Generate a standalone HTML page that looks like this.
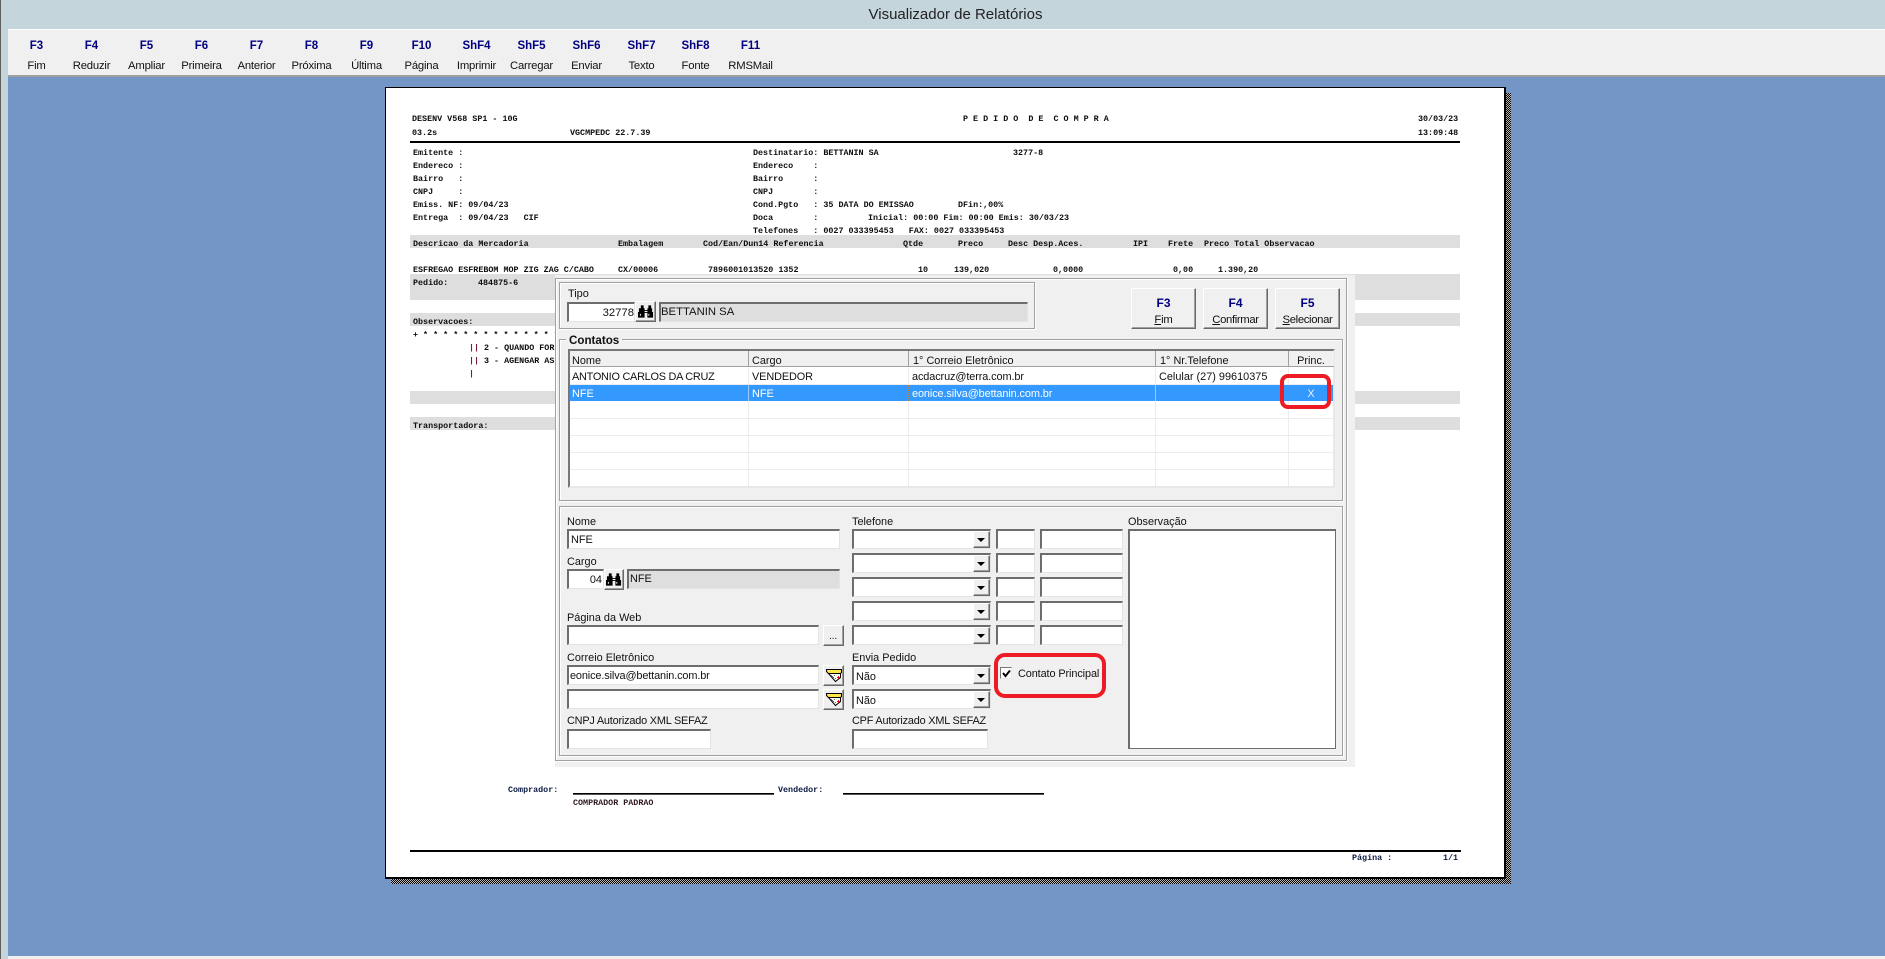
<!DOCTYPE html>
<html lang="pt"><head><meta charset="utf-8"><title>Visualizador de Relatórios</title>
<style>
html,body{margin:0;padding:0}
body{width:1885px;height:959px;overflow:hidden;position:relative;background:#c4d5dc;font-family:"Liberation Sans",sans-serif}
div,span{position:absolute;box-sizing:border-box}
.r{font:bold 8.4px/12px "Liberation Mono",monospace;white-space:pre;color:#0c0c0c;margin-top:1px}
.n{font-weight:bold;color:#000080}
.k{font:bold 11.5px/14px "Liberation Sans",sans-serif;color:#000080;text-align:center;width:55px;top:38px;margin-top:1px}
.v{font:11.3px/14px "Liberation Sans",sans-serif;color:#111;text-align:center;width:55px;top:58px;letter-spacing:-.2px;margin-top:1px}
.t{font:10.9px/14px "Liberation Sans",sans-serif;color:#111;white-space:pre;margin-top:2px}
.band{background:#dedede;left:410px;width:1050px;height:13px}
.g{border:1px solid #a0a0a0;box-shadow:inset 1px 1px 0 #fff,1px 1px 0 #fff}
.f{background:#fff;border-style:solid;border-width:2px 1px 1px 2px;border-color:#6d6d6d #e4e4e4 #e4e4e4 #6d6d6d;height:20px}
.ro{background:#dedede}
.b{background:#f0f0f0;border:1px solid;border-color:#fff #696969 #696969 #fff;box-shadow:inset -1px -1px 0 #a0a0a0}
.a{width:0;height:0;border-left:4px solid transparent;border-right:4px solid transparent;border-top:4px solid #000;left:3px;top:6px}
.gl{left:570px;width:763px;height:1px;background:#ececec}
.gv{top:351px;height:135px;width:1px;background:#ececec}
.red{border:4px solid #ed1c24}
</style></head><body>

<!-- window chrome -->
<div style="left:0;top:0;width:1px;height:959px;background:#606060"></div>
<div class="t" style="left:798px;width:315px;top:4px;font-size:15px;line-height:18px;text-align:center;color:#222">Visualizador de Relatórios</div>
<div style="left:8px;top:29px;width:1877px;height:48px;background:#f0f0f0;border-top:1px solid #fff;border-bottom:2px solid #a0a0a0"></div>
<div style="left:8px;top:77px;width:1877px;height:879px;background:#7496c6"></div>
<div style="left:8px;top:956px;width:1877px;height:3px;background:#f0f0f0"></div>

<!-- toolbar -->
<div class="k" style="left:9px">F3</div><div class="v" style="left:9px">Fim</div>
<div class="k" style="left:64px">F4</div><div class="v" style="left:64px">Reduzir</div>
<div class="k" style="left:119px">F5</div><div class="v" style="left:119px">Ampliar</div>
<div class="k" style="left:174px">F6</div><div class="v" style="left:174px">Primeira</div>
<div class="k" style="left:229px">F7</div><div class="v" style="left:229px">Anterior</div>
<div class="k" style="left:284px">F8</div><div class="v" style="left:284px">Próxima</div>
<div class="k" style="left:339px">F9</div><div class="v" style="left:339px">Última</div>
<div class="k" style="left:394px">F10</div><div class="v" style="left:394px">Página</div>
<div class="k" style="left:449px">ShF4</div><div class="v" style="left:449px">Imprimir</div>
<div class="k" style="left:504px">ShF5</div><div class="v" style="left:504px">Carregar</div>
<div class="k" style="left:559px">ShF6</div><div class="v" style="left:559px">Enviar</div>
<div class="k" style="left:614px">ShF7</div><div class="v" style="left:614px">Texto</div>
<div class="k" style="left:668px">ShF8</div><div class="v" style="left:668px">Fonte</div>
<div class="k" style="left:723px">F11</div><div class="v" style="left:723px">RMSMail</div>

<!-- page -->
<div style="left:391px;top:93px;width:1120px;height:791px;background:repeating-conic-gradient(#000 0 25%,#b8b8b8 0 50%) 0 0/2px 2px"></div>
<div style="left:385px;top:87px;width:1121px;height:792px;background:#fff;border:1px solid #000;border-right-width:2px;border-bottom-width:2px"></div>

<div class="r" style="left:412px;top:112px">DESENV V568 SP1 - 10G</div>
<div class="r" style="left:963px;top:112px">P E D I D O  D E  C O M P R A</div>
<div class="r" style="left:1418px;top:112px">30/03/23</div>
<div class="r" style="left:412px;top:126px">03.2s</div>
<div class="r" style="left:570px;top:126px">VGCMPEDC 22.7.39</div>
<div class="r" style="left:1418px;top:126px">13:09:48</div>
<div style="left:410px;top:141px;width:1050px;height:2px;background:#000"></div>

<div class="r" style="left:413px;top:146px">Emitente :</div>
<div class="r" style="left:753px;top:146px">Destinatario: BETTANIN SA</div>
<div class="r" style="left:1013px;top:146px">3277-8</div>
<div class="r" style="left:413px;top:159px">Endereco :</div>
<div class="r" style="left:753px;top:159px">Endereco    :</div>
<div class="r" style="left:413px;top:172px">Bairro   :</div>
<div class="r" style="left:753px;top:172px">Bairro      :</div>
<div class="r" style="left:413px;top:185px">CNPJ     :</div>
<div class="r" style="left:753px;top:185px">CNPJ        :</div>
<div class="r" style="left:413px;top:198px">Emiss. NF: 09/04/23</div>
<div class="r" style="left:753px;top:198px">Cond.Pgto   : 35 DATA DO EMISSAO</div>
<div class="r" style="left:958px;top:198px">DFin:,00%</div>
<div class="r" style="left:413px;top:211px">Entrega  : 09/04/23   CIF</div>
<div class="r" style="left:753px;top:211px">Doca        :</div>
<div class="r" style="left:868px;top:211px">Inicial: 00:00 Fim: 00:00 Emis: 30/03/23</div>
<div class="r" style="left:753px;top:224px">Telefones   : 0027 033395453   FAX: 0027 033395453</div>

<div class="band" style="top:235px"></div>
<div class="r" style="left:413px;top:237px">Descricao da Mercadoria</div>
<div class="r" style="left:618px;top:237px">Embalagem</div>
<div class="r" style="left:703px;top:237px">Cod/Ean/Dun14 Referencia</div>
<div class="r" style="left:903px;top:237px">Qtde</div>
<div class="r" style="left:958px;top:237px">Preco</div>
<div class="r" style="left:1008px;top:237px">Desc Desp.Aces.</div>
<div class="r" style="left:1133px;top:237px">IPI</div>
<div class="r" style="left:1168px;top:237px">Frete</div>
<div class="r" style="left:1204px;top:237px">Preco Total Observacao</div>

<div class="r" style="left:413px;top:263px">ESFREGAO ESFREBOM MOP ZIG ZAG C/CABO</div>
<div class="r" style="left:618px;top:263px">CX/00006</div>
<div class="r" style="left:708px;top:263px">7896001013520 1352</div>
<div class="r" style="left:918px;top:263px">10</div>
<div class="r" style="left:954px;top:263px">139,020</div>
<div class="r" style="left:1053px;top:263px">0,0000</div>
<div class="r" style="left:1173px;top:263px">0,00</div>
<div class="r" style="left:1218px;top:263px">1.390,20</div>

<div class="band" style="top:274px;height:26px"></div>
<div class="r" style="left:413px;top:276px">Pedido:</div>
<div class="r" style="left:478px;top:276px">484875-6</div>
<div class="band" style="top:313px"></div>
<div class="r" style="left:413px;top:315px">Observacoes:</div>
<div class="r" style="left:413px;top:328px">+ * * * * * * * * * * * * * * *</div>
<div class="r" style="left:469px;top:341px;color:#7a1a3a">||</div>
<div class="r" style="left:484px;top:341px">2 - QUANDO FOR</div>
<div class="r" style="left:469px;top:354px;color:#7a1a3a">||</div>
<div class="r" style="left:484px;top:354px">3 - AGENGAR AS</div>
<div class="r" style="left:469px;top:367px;color:#7a1a3a">|</div>
<div class="band" style="top:391px"></div>
<div class="band" style="top:417px"></div>
<div class="r" style="left:413px;top:419px">Transportadora:</div>

<!-- footer of page -->
<div class="r" style="left:508px;top:783px;color:#0a1a40">Comprador:</div>
<div style="left:573px;top:793px;width:201px;height:1px;background:#000;box-shadow:0 1px 0 #555"></div>
<div class="r" style="left:778px;top:783px;color:#0a1a40">Vendedor:</div>
<div style="left:843px;top:793px;width:201px;height:1px;background:#000;box-shadow:0 1px 0 #555"></div>
<div class="r" style="left:573px;top:796px;color:#301a20">COMPRADOR PADRAO</div>
<div style="left:410px;top:850px;width:1051px;height:2px;background:#000"></div>
<div class="r" style="left:1352px;top:851px;color:#0a1a40">Página :</div>
<div class="r" style="left:1443px;top:851px;color:#0a1a40">1/1</div>

<!-- dialog -->
<div style="left:555px;top:275px;width:800px;height:492px;background:#f0f0f0"></div>
<div class="g" style="left:555px;top:278px;width:792px;height:483px"></div>

<!-- Tipo group -->
<div class="g" style="left:559px;top:282px;width:476px;height:47px"></div>
<div class="t" style="left:568px;top:285px">Tipo</div>
<div class="f" style="left:567px;top:302px;width:68px"></div>
<div class="t" style="left:567px;width:67px;top:304px;text-align:right;font-size:11.3px">32778</div>
<div class="b" style="left:635px;top:301px;width:21px;height:21px">
<svg style="position:absolute;left:2px;top:2px" width="16" height="15" viewBox="0 0 17 15"><path fill="#000" d="M3 1h3v3h1v2h3V4h1V1h3v3h1v4h1v6H10V9H7v5H0V8h1V4h2z"/><path fill="#fff" d="M2 10h1v2H2zM11 10h1v2h-1zM7 7h3v1H7z"/></svg></div>
<div class="f ro" style="left:659px;top:302px;width:369px"></div>
<div class="t" style="left:661px;top:303px;font-size:11.3px">BETTANIN SA</div>

<!-- Buttons -->
<div class="b" style="left:1131px;top:288px;width:65px;height:41px"></div>
<div class="b" style="left:1203px;top:288px;width:65px;height:41px"></div>
<div class="b" style="left:1275px;top:288px;width:65px;height:41px"></div>
<div class="k" style="left:1136px;top:295px;font-size:12px">F3</div>
<div class="k" style="left:1208px;top:295px;font-size:12px">F4</div>
<div class="k" style="left:1280px;top:295px;font-size:12px">F5</div>
<div class="v" style="left:1136px;top:312px"><u>F</u>im</div>
<div class="v" style="left:1208px;top:312px;letter-spacing:-.35px"><u>C</u>onfirmar</div>
<div class="v" style="left:1280px;top:312px;width:55px;letter-spacing:-.35px"><u>S</u>elecionar</div>

<!-- Contatos -->
<div class="g" style="left:559px;top:339px;width:784px;height:162px"></div>
<div class="t" style="left:566px;top:332px;padding:0 3px;background:#f0f0f0;font:bold 11.6px/14px 'Liberation Sans',sans-serif;color:#111">Contatos</div>
<div style="left:568px;top:349px;width:767px;height:139px;background:#fff;border-style:solid;border-width:2px 2px 2px 2px;border-color:#777 #e8e8e8 #e8e8e8 #777"></div>
<div style="left:570px;top:351px;width:764px;height:16px;background:#f0f0f0;border-bottom:1px solid #a0a0a0"></div>
<div class="gl" style="top:384px"></div>
<div class="gl" style="top:418px"></div>
<div class="gl" style="top:435px"></div>
<div class="gl" style="top:452px"></div>
<div class="gl" style="top:469px"></div>
<div class="gv" style="left:748px"></div>
<div class="gv" style="left:908px"></div>
<div class="gv" style="left:1155px"></div>
<div class="gv" style="left:1288px"></div>
<div style="left:748px;top:351px;width:1px;height:16px;background:#a0a0a0"></div>
<div style="left:908px;top:351px;width:1px;height:16px;background:#a0a0a0"></div>
<div style="left:1155px;top:351px;width:1px;height:16px;background:#a0a0a0"></div>
<div style="left:1288px;top:351px;width:1px;height:16px;background:#a0a0a0"></div>
<div style="left:570px;top:385px;width:763px;height:16px;background:#3399ff"></div>
<div style="left:908px;top:385px;width:248px;height:16px;border:1px dotted #d08030"></div>
<div style="left:748px;top:385px;width:1px;height:16px;background:#9cc9f5"></div>
<div style="left:1155px;top:385px;width:1px;height:16px;background:#9cc9f5"></div>
<div class="t" style="left:572px;top:352px">Nome</div>
<div class="t" style="left:752px;top:352px">Cargo</div>
<div class="t" style="left:913px;top:352px">1° Correio Eletrônico</div>
<div class="t" style="left:1160px;top:352px">1° Nr.Telefone</div>
<div class="t" style="left:1289px;width:44px;text-align:center;top:352px">Princ.</div>
<div class="t" style="left:572px;top:368px;letter-spacing:-.25px">ANTONIO CARLOS DA CRUZ</div>
<div class="t" style="left:752px;top:368px;letter-spacing:-.1px">VENDEDOR</div>
<div class="t" style="left:912px;top:368px;letter-spacing:-.1px">acdacruz@terra.com.br</div>
<div class="t" style="left:1159px;top:368px">Celular (27) 99610375</div>
<div class="t" style="left:572px;top:385px;color:#fff">NFE</div>
<div class="t" style="left:752px;top:385px;color:#fff">NFE</div>
<div class="t" style="left:912px;top:385px;color:#fff;letter-spacing:-.1px">eonice.silva@bettanin.com.br</div>
<div class="t" style="left:1289px;width:44px;text-align:center;top:385px;color:#e8f2ff">X</div>
<div class="red" style="left:1280px;top:374px;width:51px;height:35px;border-radius:8px"></div>

<!-- Lower group -->
<div class="g" style="left:559px;top:506px;width:784px;height:250px"></div>
<div class="t" style="left:567px;top:513px">Nome</div>
<div class="f" style="left:567px;top:529px;width:273px"></div>
<div class="t" style="left:571px;top:531px">NFE</div>
<div class="t" style="left:567px;top:553px">Cargo</div>
<div class="f" style="left:567px;top:569px;width:37px"></div>
<div class="t" style="left:567px;width:35px;text-align:right;top:571px">04</div>
<div class="b" style="left:604px;top:569px;width:20px;height:21px">
<svg style="position:absolute;left:1px;top:2px" width="16" height="15" viewBox="0 0 17 15"><path fill="#000" d="M3 1h3v3h1v2h3V4h1V1h3v3h1v4h1v6H10V9H7v5H0V8h1V4h2z"/><path fill="#fff" d="M2 10h1v2H2zM11 10h1v2h-1zM7 7h3v1H7z"/></svg></div>
<div class="f ro" style="left:627px;top:569px;width:213px"></div>
<div class="t" style="left:630px;top:570px">NFE</div>
<div class="t" style="left:567px;top:609px">Página da Web</div>
<div class="f" style="left:567px;top:625px;width:252px"></div>
<div class="b" style="left:823px;top:625px;width:21px;height:21px"><span class="t" style="left:5px;top:2px;font-size:10px">...</span></div>
<div class="t" style="left:567px;top:649px">Correio Eletrônico</div>
<div class="f" style="left:567px;top:665px;width:252px"></div>
<div class="t" style="left:570px;top:667px;letter-spacing:-.12px">eonice.silva@bettanin.com.br</div>
<div class="b" style="left:823px;top:665px;width:21px;height:21px">
<svg style="position:absolute;left:1px;top:3px" width="17" height="15" viewBox="0 0 17 15"><path fill="#fff" stroke="#000" d="M3.500 4.500L10.500 12.500L15.500 8.500V4.500z"/><path fill="#ffe84a" stroke="#000" d="M1.500 .5H16.500V3.500L15.500 4.500H3.500L1.500 2.500z"/><path fill="#e01010" d="M13 7h1v1h1v1h-1v1h-1V9h-1V8h1z"/><path fill="#666" d="M6 6h1v1H6zM8 8h1v1H8zM9 6h1v1H9zM7 7h1v1H7zM10 9h1v1h-1z"/></svg></div>
<div class="f" style="left:567px;top:689px;width:252px"></div>
<div class="b" style="left:823px;top:689px;width:21px;height:21px">
<svg style="position:absolute;left:1px;top:3px" width="17" height="15" viewBox="0 0 17 15"><path fill="#fff" stroke="#000" d="M3.500 4.500L10.500 12.500L15.500 8.500V4.500z"/><path fill="#ffe84a" stroke="#000" d="M1.500 .5H16.500V3.500L15.500 4.500H3.500L1.500 2.500z"/><path fill="#e01010" d="M13 7h1v1h1v1h-1v1h-1V9h-1V8h1z"/><path fill="#666" d="M6 6h1v1H6zM8 8h1v1H8zM9 6h1v1H9zM7 7h1v1H7zM10 9h1v1h-1z"/></svg></div>
<div class="t" style="left:567px;top:712px;letter-spacing:-.2px">CNPJ Autorizado XML SEFAZ</div>
<div class="f" style="left:567px;top:729px;width:144px"></div>

<!-- Telefone column -->
<div class="t" style="left:852px;top:513px">Telefone</div>
<div class="f" style="left:852px;top:529px;width:139px"></div><div class="b" style="left:973px;top:531px;width:17px;height:17px"><span class="a"></span></div>
<div class="f" style="left:996px;top:529px;width:39px"></div><div class="f" style="left:1040px;top:529px;width:83px"></div>
<div class="f" style="left:852px;top:553px;width:139px"></div><div class="b" style="left:973px;top:555px;width:17px;height:17px"><span class="a"></span></div>
<div class="f" style="left:996px;top:553px;width:39px"></div><div class="f" style="left:1040px;top:553px;width:83px"></div>
<div class="f" style="left:852px;top:577px;width:139px"></div><div class="b" style="left:973px;top:579px;width:17px;height:17px"><span class="a"></span></div>
<div class="f" style="left:996px;top:577px;width:39px"></div><div class="f" style="left:1040px;top:577px;width:83px"></div>
<div class="f" style="left:852px;top:601px;width:139px"></div><div class="b" style="left:973px;top:603px;width:17px;height:17px"><span class="a"></span></div>
<div class="f" style="left:996px;top:601px;width:39px"></div><div class="f" style="left:1040px;top:601px;width:83px"></div>
<div class="f" style="left:852px;top:625px;width:139px"></div><div class="b" style="left:973px;top:627px;width:17px;height:17px"><span class="a"></span></div>
<div class="f" style="left:996px;top:625px;width:39px"></div><div class="f" style="left:1040px;top:625px;width:83px"></div>
<div class="t" style="left:852px;top:649px">Envia Pedido</div>
<div class="f" style="left:852px;top:665px;width:139px"></div><div class="b" style="left:973px;top:667px;width:17px;height:17px"><span class="a"></span></div>
<div class="t" style="left:856px;top:668px">Não</div>
<div class="f" style="left:852px;top:689px;width:139px"></div><div class="b" style="left:973px;top:691px;width:17px;height:17px"><span class="a"></span></div>
<div class="t" style="left:856px;top:692px">Não</div>
<div class="t" style="left:852px;top:712px;letter-spacing:-.2px">CPF Autorizado XML SEFAZ</div>
<div class="f" style="left:852px;top:729px;width:136px"></div>

<!-- Checkbox -->
<div style="left:1000px;top:667px;width:12px;height:12px;background:#fff;border-style:solid;border-width:1px;border-color:#777 #e8e8e8 #e8e8e8 #777">
<svg style="position:absolute;left:1px;top:1px" width="9" height="9" viewBox="0 0 9 9"><path fill="none" stroke="#000" stroke-width="2" d="M1 4l2.500 3L8 1.500"/></svg></div>
<div class="t" style="left:1018px;top:665px;letter-spacing:-.1px">Contato Principal</div>
<div class="red" style="left:994px;top:653px;width:112px;height:45px;border-radius:11px"></div>

<!-- Observacao -->
<div class="t" style="left:1128px;top:513px">Observação</div>
<div style="left:1128px;top:529px;width:208px;height:220px;background:#fff;border:2px solid #6d6d6d;border-right-width:1px;border-bottom-width:1px;outline:0"></div>
</body></html>
